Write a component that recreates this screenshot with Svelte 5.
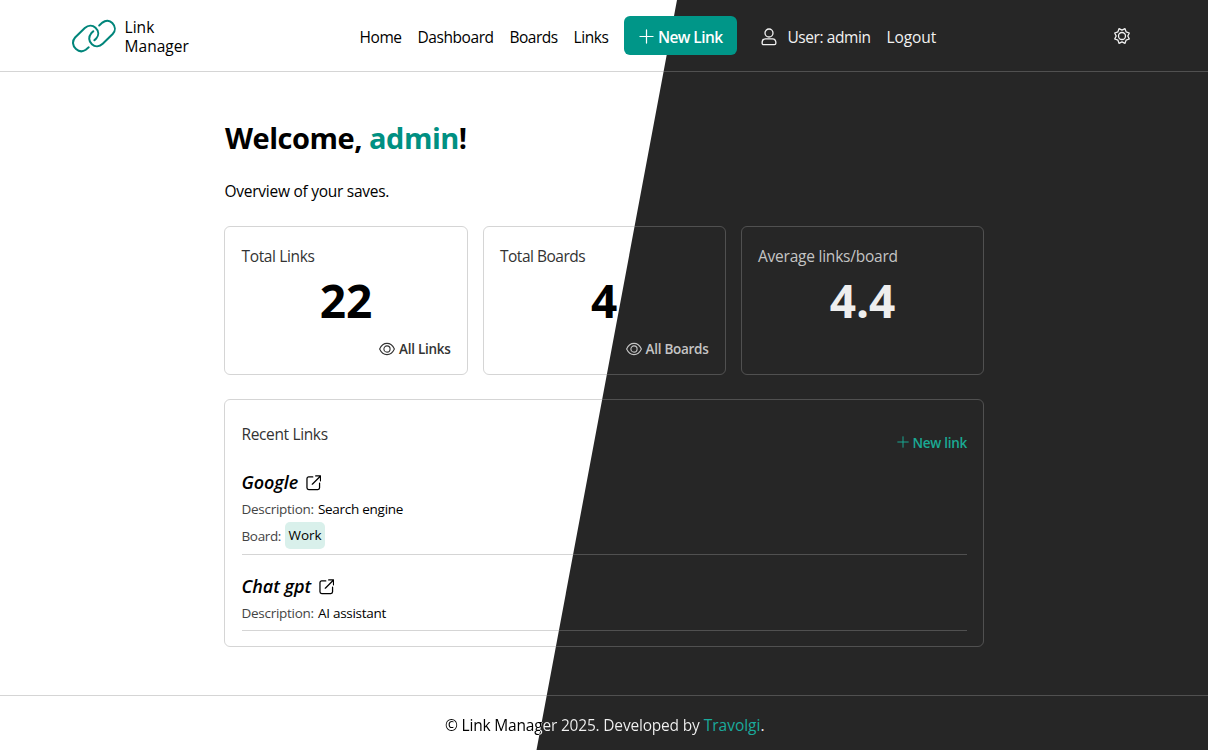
<script>
  const nav = [
    { label: 'Home', cls: 'home' },
    { label: 'Dashboard', cls: 'dash' },
    { label: 'Boards', cls: 'boards' },
    { label: 'Links', cls: 'links' }
  ];
  const links = [
    { name: 'Google', desc: 'Search engine', board: 'Work' },
    { name: 'Chat gpt', desc: 'AI assistant', board: null }
  ];
</script>

{#snippet plus()}
  <svg class="plus" viewBox="0 0 16 16" fill="none" stroke="currentColor" stroke-width="1.3" stroke-linecap="round">
    <path d="M8 1v14M1 8h14" />
  </svg>
{/snippet}

{#snippet eye()}
  <svg class="eye" viewBox="0 0 16 16" fill="none" stroke="currentColor" stroke-width="1.1">
    <path d="M.6 8S3.2 2.4 8 2.4 15.400 8 15.400 8 12.800 13.600 8 13.600.6 8 .6 8z" stroke-linejoin="round" />
    <circle cx="8" cy="8" r="3.1" />
  </svg>
{/snippet}

<div class="page">
  <header>
    <a class="brand" href="#home">
      <svg class="logo" viewBox="0 0 46 34" fill="none" stroke="#00857a" stroke-width="2" stroke-linecap="round">
        <path d="M17.700 28.300L14.800 30.800C11.600 33 7.800 32.600 5 30.100C1.400 26.900 1 22 4.100 18.500L13.800 9.100C17.200 6 21.400 5.800 24.500 8.700C27.800 11.800 28.100 16.200 25.200 19.500L23.400 21.300" />
        <path d="M28.200 6.500L31.400 3.600C34.600 1.100 38.600 1.300 41.300 4C44.500 7.300 44.700 11.700 41.700 15L31.700 24.700C28.400 27.800 24 28 20.900 25.200C17.500 22.100 17.400 17.600 20.200 14.300L22.300 12.300" />
      </svg>
      <span class="brand-name">Link<br />Manager</span>
    </a>
    <nav>
      {#each nav as item}
        <a class={item.cls} href="#{item.cls}">{item.label}</a>
      {/each}
      <a class="button" href="#new">{@render plus()}<span>New Link</span></a>
      <a class="user" href="#user">
        <svg viewBox="0 0 16 18" fill="none" stroke="currentColor" stroke-width="1.300">
          <circle cx="8" cy="5" r="4" />
          <path d="M4.500 10.800h7c2.200 0 3.400 1.700 3.400 4.200 0 1-.6 1.700-1.500 1.700H2.600c-.9 0-1.500-.7-1.500-1.700 0-2.500 1.200-4.200 3.400-4.200z" />
        </svg>
        <span>User: admin</span>
      </a>
      <a class="logout" href="#logout">Logout</a>
    </nav>
    <svg class="gear" viewBox="0 0 18 18" fill="none" stroke="#f2f2f2" stroke-width="1.300" stroke-linejoin="round">
      <path d="M9 3.200L12 1.700L13.100 4.900L16.300 6L14.800 9L16.300 12L13.100 13.100L12 16.300L9 14.800L6 16.300L4.900 13.100L1.700 12L3.200 9L1.700 6L4.900 4.900L6 1.700z" />
      <circle cx="9" cy="9" r="3.500" />
    </svg>
  </header>

  <main>
    <h1>Welcome, <span class="accent">admin</span>!</h1>
    <p class="intro">Overview of your saves.</p>

    <section class="cards">
      <article class="card">
        <h2>Total Links</h2>
        <strong>22</strong>
        <a class="more" href="#links">{@render eye()}<span>All Links</span></a>
      </article>
      <article class="card">
        <h2 class="tight">Total Boards</h2>
        <strong>4</strong>
        <a class="more night" href="#boards">{@render eye()}<span>All Boards</span></a>
      </article>
      <article class="card night">
        <h2 class="loose">Average links/board</h2>
        <strong>4.4</strong>
      </article>
    </section>

    <section class="recent">
      <div class="recent-head">
        <h2>Recent Links</h2>
        <a href="#new">{@render plus()}<span>New link</span></a>
      </div>
      {#each links as link}
        <div class="entry">
          <h3>
            <span>{link.name}</span>
            <svg viewBox="0 0 16 16" fill="none" stroke="currentColor" stroke-width="1.300" stroke-linecap="round" stroke-linejoin="round">
              <path d="M7 2H2.800C1.800 2 1 2.800 1 3.800v9.400c0 1 .8 1.800 1.800 1.800h9.400c1 0 1.800-.8 1.800-1.800V8.500M10 1h5v5M15 1L6.500 9.500" />
            </svg>
          </h3>
          <div class="row"><span>Description:</span><b>{link.desc}</b></div>
          {#if link.board}
            <div class="row board"><span>Board:</span><b class="tag">{link.board}</b></div>
          {/if}
        </div>
      {/each}
    </section>
  </main>

  <footer>
    <p><span class="copy">© Link Manager 2025. Developed by</span> <a href="#travolgi">Travolgi</a><span class="dot">.</span></p>
  </footer>
</div>

<style>
  :global(body) {
    margin: 0;
  }
  .page {
    --line: rgba(146, 146, 146, 0.39);
    width: 1208px;
    height: 750px;
    box-sizing: border-box;
    overflow: hidden;
    display: flex;
    flex-direction: column;
    position: relative;
    isolation: isolate;
    background: #fff;
    color: #000;
    font-family: 'Open Sans', 'Noto Sans', sans-serif;
    font-size: 15.500px;
    white-space: nowrap;
  }
  .page::before {
    content: '';
    position: absolute;
    inset: 0;
    z-index: -1;
    background: #262626;
    clip-path: polygon(677px 0, 100% 0, 100% 100%, 536.500px 100%);
  }
  a {
    color: inherit;
    text-decoration: none;
  }
  h1,
  h2,
  h3,
  p {
    margin: 0;
    font-weight: 400;
  }
  svg {
    display: block;
    flex: none;
  }
  header {
    height: 72px;
    flex: none;
    box-sizing: border-box;
    border-bottom: 1px solid var(--line);
    padding: 0 77px 0 71px;
    display: flex;
    align-items: center;
  }
  .brand {
    display: flex;
    align-items: center;
    gap: 7.500px;
    width: 288.500px;
    padding-top: 2px;
  }
  .logo {
    width: 46px;
    height: 34px;
    margin-top: -2px;
  }
  .brand-name {
    line-height: 19px;
    font-weight: 500;
    letter-spacing: 0.050px;
  }
  nav {
    flex: 1;
    display: flex;
    align-items: center;
    gap: 16px;
    padding-top: 2px;
    letter-spacing: -0.430px;
  }
  .home {
    width: 42px;
  }
  .dash {
    width: 76px;
  }
  .boards {
    width: 48px;
    letter-spacing: -0.500px;
  }
  .links {
    width: 34.500px;
  }
  .button {
    width: 113px;
    height: 39px;
    margin-top: -2px;
    box-sizing: border-box;
    border-radius: 6px;
    background: #009688;
    color: #fff;
    font-weight: 600;
    letter-spacing: -0.600px;
    display: flex;
    align-items: center;
    padding: 3px 0 0 15px;
    gap: 4px;
  }
  .button .plus {
    width: 15px;
    height: 15px;
    margin-top: -2px;
  }
  .user {
    width: 110px;
    margin-left: 7.500px;
    color: #f2f2f2;
    display: flex;
    align-items: center;
    gap: 11px;
  }
  .user svg {
    width: 16px;
    height: 18px;
  }
  .logout {
    color: #f2f2f2;
    letter-spacing: -0.100px;
  }
  .gear {
    width: 18px;
    height: 18px;
  }
  main {
    width: 760px;
    height: 623px;
    flex: none;
    box-sizing: border-box;
    margin-left: 224px;
    padding-top: 45px;
  }
  h1 {
    font-size: 29px;
    line-height: 42px;
    font-weight: 700;
    padding-left: 1px;
    letter-spacing: -0.480px;
  }
  .accent {
    color: #009082;
  }
  .intro {
    line-height: 24px;
    margin-top: 20px;
    padding-left: 0.500px;
    letter-spacing: -0.260px;
  }
  .cards {
    display: grid;
    grid-template-columns: 243.500px 243px 243.500px;
    gap: 15px;
    margin-top: 23px;
  }
  .card {
    box-sizing: border-box;
    height: 149px;
    border: 1px solid var(--line);
    border-radius: 6px;
    padding: 17px 16px 0 16.500px;
    display: flex;
    flex-direction: column;
  }
  h2 {
    font-size: 15.500px;
    line-height: 24px;
    color: #333;
    letter-spacing: -0.360px;
  }
  .tight {
    letter-spacing: -0.500px;
  }
  .loose {
    letter-spacing: -0.230px;
  }
  strong {
    font-size: 46px;
    line-height: 64px;
    font-weight: 700;
    text-align: center;
  }
  .more {
    display: flex;
    justify-content: flex-end;
    align-items: center;
    gap: 4px;
    height: 20px;
    margin-top: 7px;
    font-size: 13.500px;
    font-weight: 600;
    letter-spacing: -0.280px;
    color: #333;
  }
  .eye {
    width: 16px;
    height: 16px;
    margin-top: -1px;
  }
  .night,
  .night h2 {
    color: #c4c4c4;
  }
  .night strong {
    color: #eee;
  }
  .recent {
    box-sizing: border-box;
    height: 248px;
    margin-top: 24px;
    border: 1px solid var(--line);
    border-radius: 6px;
    padding: 22px 16px 0 16.500px;
  }
  .recent-head {
    display: flex;
    justify-content: space-between;
    height: 43px;
  }
  .recent-head a {
    display: flex;
    align-items: center;
    height: 24px;
    margin-top: 9px;
    gap: 4px;
    color: #1aaa94;
    font-size: 13.500px;
    font-weight: 600;
    letter-spacing: -0.280px;
  }
  .recent-head .plus {
    width: 12px;
    height: 12px;
    margin-top: -2px;
  }
  .entry {
    border-bottom: 1px solid var(--line);
    padding-bottom: 4.500px;
    margin-bottom: 14px;
  }
  .entry:last-child {
    padding-bottom: 6px;
  }
  h3 {
    display: flex;
    align-items: center;
    gap: 7.500px;
    height: 33px;
    font-size: 18px;
    font-style: italic;
    font-weight: 600;
    letter-spacing: -0.050px;
  }
  h3 svg {
    width: 15.500px;
    height: 15.500px;
    margin-top: 3px;
  }
  .row {
    display: flex;
    align-items: center;
    height: 22px;
    gap: 4px;
    font-size: 13.500px;
    letter-spacing: -0.270px;
    color: #444;
  }
  .row b {
    font-weight: 500;
    color: #000;
  }
  .board {
    height: 27px;
    margin-top: 2px;
    padding-bottom: 0.500px;
    letter-spacing: -0.350px;
  }
  .row .tag {
    box-sizing: border-box;
    width: 40px;
    height: 27px;
    line-height: 27px;
    text-align: center;
    border-radius: 5px;
    background: #d9f0eb;
    letter-spacing: 0;
  }
  footer {
    flex: 1;
    border-top: 1px solid var(--line);
    padding: 17px 0 0 445px;
    line-height: 24px;
  }
  .copy {
    display: inline-block;
    color: transparent;
    background: linear-gradient(100.600deg, #000 96.500px, #f2f2f2 97px);
    background-clip: text;
    letter-spacing: -0.190px;
  }
  footer a {
    color: #1aaa9c;
  }
  .dot {
    color: #f2f2f2;
  }
</style>
